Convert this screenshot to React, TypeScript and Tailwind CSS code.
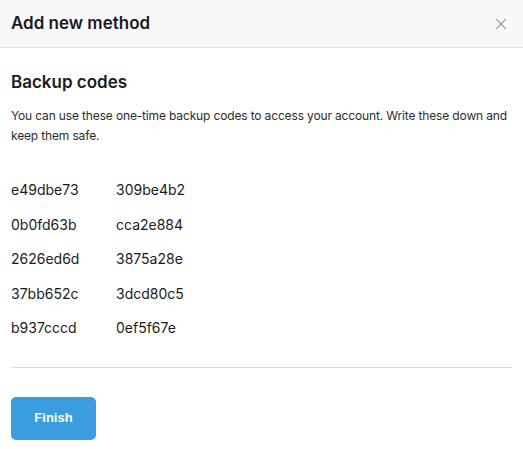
import { X } from "lucide-react";

const codes = [
  ["e49dbe73", "309be4b2"],
  ["0b0fd63b", "cca2e884"],
  ["2626ed6d", "3875a28e"],
  ["37bb652c", "3dcd80c5"],
  ["b937cccd", "0ef5f67e"],
];

export default function App() {
  return (
    <div className="w-[523px] h-[449px] bg-white text-[#1b1b1f] font-['Inter','Noto_Sans',sans-serif] overflow-hidden">
      <div className="h-[48px] flex items-center justify-between pl-[11px] pr-[13px] bg-[#f8f8fa] border-b border-[#e3e3e6]">
        <h1 className="text-[17px] font-semibold">Add new method</h1>
        <button type="button" className="text-[#a0a0a4]">
          <X size={18} strokeWidth={1.5} />
        </button>
      </div>

      <div className="px-[11px]">
        <h2 className="mt-[22px] text-[17px] font-semibold leading-6">Backup codes</h2>
        <p className="mt-[12px] text-[12px] tracking-[-0.15px] leading-5 text-[#2c2c30]">
          You can use these one-time backup codes to access your account. Write these down and keep them safe.
        </p>

        <div className="mt-[34px] grid grid-cols-[105px_105px] text-[14px] leading-5">
          {codes.map((row, i) => (
            <div key={i} className="contents">
              {row.map((code) => (
                <span key={code} className="h-[34.5px]">
                  {code}
                </span>
              ))}
            </div>
          ))}
        </div>

        <div className="mt-[14px] border-t border-[#dedee2]" />

        <button
          type="button"
          className="mt-[29px] w-[85px] h-[43px] rounded-[5px] bg-[#3b9ddf] text-white text-[13px] font-bold font-['Liberation_Sans',sans-serif]"
        >
          Finish
        </button>
      </div>
    </div>
  );
}
